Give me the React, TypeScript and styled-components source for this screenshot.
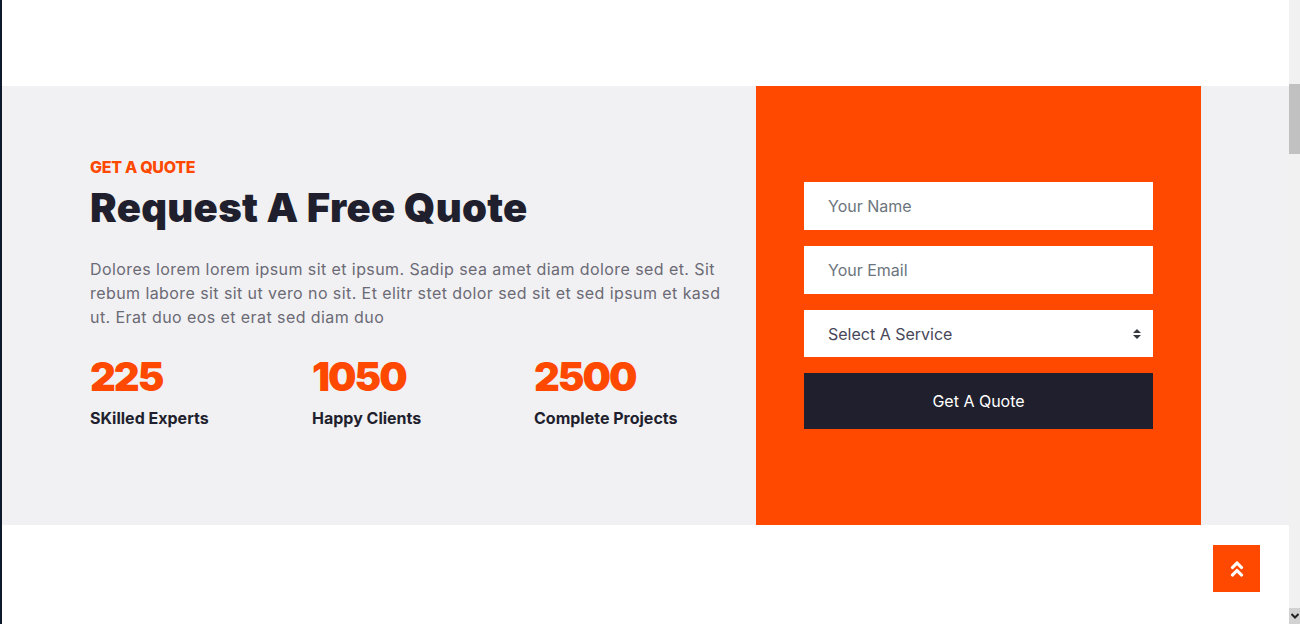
import React, { FC } from 'react'
import styled, { createGlobalStyle } from 'styled-components'
import { FaAngleDoubleUp } from 'react-icons/fa'

const GlobalStyle = createGlobalStyle`
    * {
        box-sizing: border-box;
    }
    body {
        margin: 0;
        font-family: Inter, "Open Sans", sans-serif;
        background: #fff;
    }
`

const Page = styled.div`
    display: flex;
    height: 624px;
    overflow: hidden;
    border-left: 2px solid #0d1a2b;
    position: relative;
`
const Main = styled.div`
    flex: 1;
    display: flex;
    flex-direction: column;
`
const Spacer = styled.div<{ $h: number }>`
    height: ${p => p.$h}px;
    flex-shrink: 0;
`
const Section = styled.section`
    height: 439px;
    background: #f1f1f3;
    padding: 0 88px;
    display: grid;
    grid-template-columns: 666px 1fr;
`
const Intro = styled.div`
    padding-top: 69px;
`
const Kicker = styled.h5`
    margin: 0 0 5px;
    color: #ff4800;
    font-size: 16px;
    line-height: 24px;
    font-weight: 800;
    letter-spacing: -0.3px;
    text-transform: uppercase;
`
const Title = styled.h1`
    margin: 0 0 25px;
    color: #1f1f2e;
    font-size: 40px;
    line-height: 48px;
    font-weight: 900;
    letter-spacing: 0.3px;
`
const Text = styled.p`
    margin: 0 0 24px;
    width: 640px;
    color: #6b6a75;
    font-size: 16px;
    line-height: 24px;
    letter-spacing: 0.42px;
`
const Stats = styled.div`
    display: grid;
    grid-template-columns: repeat(3, 222px);
`
const StatNum = styled.div`
    color: #ff4800;
    font-size: 40px;
    line-height: 48px;
    font-weight: 900;
    letter-spacing: -2px;
`
const StatLabel = styled.div`
    margin-top: 5px;
    color: #1f1f2e;
    font-size: 16px;
    line-height: 24px;
    font-weight: 700;
`
const FormPanel = styled.div`
    background: #ff4800;
    padding: 0 48px;
    display: flex;
    flex-direction: column;
    justify-content: center;
    gap: 16px;
`
const Field = styled.input`
    height: 48px;
    border: none;
    outline: none;
    background: #fff;
    padding: 0 24px;
    font-family: inherit;
    font-size: 16px;
    color: #484759;
    &::placeholder {
        color: #6c757d;
    }
`
const SelectWrap = styled.div`
    position: relative;
`
const Select = styled.select`
    width: 100%;
    height: 47px;
    border: none;
    outline: none;
    background: #fff;
    padding: 0 24px;
    appearance: none;
    font-family: inherit;
    font-size: 16px;
    color: #484759;
`
const SelectArrows = styled.svg`
    position: absolute;
    right: 12px;
    top: 19px;
    pointer-events: none;
`
const SubmitButton = styled.button`
    height: 56px;
    border: none;
    background: #1f1f2e;
    color: #fff;
    font-family: inherit;
    font-size: 16px;
    font-weight: 400;
`
const ToTop = styled.a`
    position: absolute;
    right: 40px;
    bottom: 32px;
    width: 47px;
    height: 47px;
    background: #ff4800;
    color: #fff;
    display: flex;
    align-items: center;
    justify-content: center;
    font-size: 20px;
`
const Rail = styled.div`
    width: 11px;
    flex-shrink: 0;
    background: #f1f1f1;
    display: flex;
    flex-direction: column;
`
const RailTrack = styled.div`
    flex: 1;
    padding-top: 84px;
`
const Thumb = styled.div`
    height: 70px;
    background: #c1c1c1;
`
const RailButton = styled.div`
    height: 16px;
    background: #d2d2d2;
    display: flex;
    align-items: center;
    justify-content: center;
`

const stats = [
    { num: '225', label: 'SKilled Experts' },
    { num: '1050', label: 'Happy Clients' },
    { num: '2500', label: 'Complete Projects' },
]

const App: FC = () => {
    return (
        <>
            <GlobalStyle />
            <Page>
                <Main>
                    <Spacer $h={86} />
                    <Section>
                        <Intro>
                            <Kicker>Get A Quote</Kicker>
                            <Title>Request A Free Quote</Title>
                            <Text>
                                Dolores lorem lorem ipsum sit et ipsum. Sadip sea amet diam dolore sed et. Sit
                                rebum labore sit sit ut vero no sit. Et elitr stet dolor sed sit et sed ipsum et kasd
                                ut. Erat duo eos et erat sed diam duo
                            </Text>
                            <Stats>
                                {stats.map(item => (
                                    <div key={item.label}>
                                        <StatNum>{item.num}</StatNum>
                                        <StatLabel>{item.label}</StatLabel>
                                    </div>
                                ))}
                            </Stats>
                        </Intro>
                        <FormPanel>
                            <Field placeholder="Your Name" />
                            <Field placeholder="Your Email" />
                            <SelectWrap>
                                <Select defaultValue="">
                                    <option value="">Select A Service</option>
                                    <option value="1">Service 1</option>
                                    <option value="2">Service 2</option>
                                    <option value="3">Service 3</option>
                                </Select>
                                <SelectArrows width="8" height="10" viewBox="0 0 8 10">
                                    <path d="M4 0 L8 4 H0 Z M4 10 L0 6 H8 Z" fill="#343a40" />
                                </SelectArrows>
                            </SelectWrap>
                            <SubmitButton>Get A Quote</SubmitButton>
                        </FormPanel>
                    </Section>
                </Main>
                <Rail>
                    <RailTrack>
                        <Thumb />
                    </RailTrack>
                    <RailButton>
                        <svg width="8" height="6" viewBox="0 0 8 6">
                            <path d="M0.5 1 L4 4.5 L7.5 1" stroke="#222" strokeWidth="2" fill="none" />
                        </svg>
                    </RailButton>
                </Rail>
                <ToTop href="#">
                    <FaAngleDoubleUp />
                </ToTop>
            </Page>
        </>
    )
}

export default App
